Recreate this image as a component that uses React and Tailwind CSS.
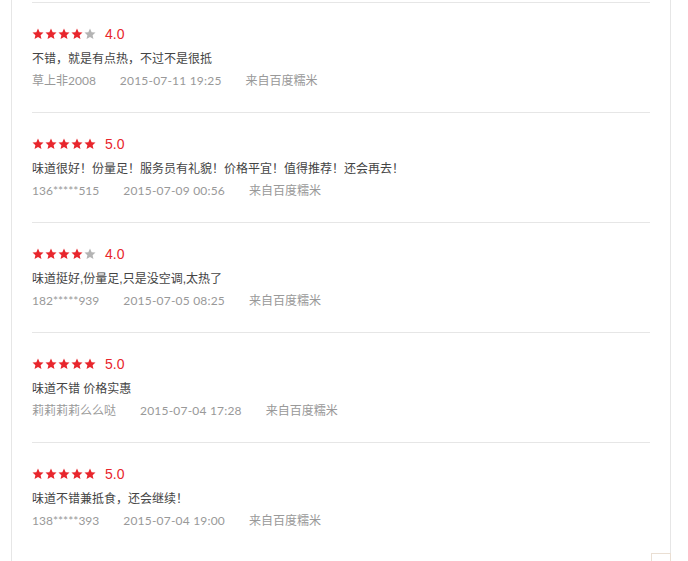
import React from "react";

const reviews = [
  { score: 4, text: "不错，就是有点热，不过不是很抵", user: "草上非2008", date: "2015-07-11 19:25" },
  { score: 5, text: "味道很好！份量足！服务员有礼貌！价格平宜！值得推荐！还会再去！", user: "136*****515", date: "2015-07-09 00:56" },
  { score: 4, text: "味道挺好,份量足,只是没空调,太热了", user: "182*****939", date: "2015-07-05 08:25" },
  { score: 5, text: "味道不错 价格实惠", user: "莉莉莉莉么么哒", date: "2015-07-04 17:28" },
  { score: 5, text: "味道不错兼抵食，还会继续！", user: "138*****393", date: "2015-07-04 19:00" },
];

function Star({ on }) {
  return (
    <svg width="12" height="12" viewBox="0 0 24 24" className="block">
      <path
        d="M12 1.2l3.3 7.1 7.7.8-5.8 5.2 1.7 7.6L12 18l-6.9 3.9 1.7-7.6L1 9.1l7.7-.8z"
        fill={on ? "#e8262d" : "#b4b4b4"}
      />
    </svg>
  );
}

export default function App() {
  return (
    <div
      className="relative w-[688px] h-[561px] bg-white overflow-hidden"
      style={{ fontFamily: '"Liberation Sans", "Noto Sans CJK SC", sans-serif' }}
    >
      <div className="ml-[11px] w-[660px] h-[561px] border-l border-r border-[#e6e6e6] px-[20px] pt-[2px]">
        {reviews.map((r, i) => (
          <div key={i} className="h-[110px] border-t border-[#e6e6e6] pt-[21px]">
            <div className="flex items-center h-[20px]">
              <div className="flex gap-[1px]">
                {[0, 1, 2, 3, 4].map((k) => (
                  <Star key={k} on={k < r.score} />
                ))}
              </div>
              <span className="ml-[9px] text-[14px] leading-[20px] text-[#e8262d]">{r.score}.0</span>
            </div>
            <div className="mt-[4px] text-[12px] leading-[22px] text-[#444]">{r.text}</div>
            <div
              className="flex text-[12px] leading-[22px] text-[#999]"
              style={{ fontFamily: '"Lato", "Noto Sans CJK SC", sans-serif' }}
            >
              <span className="mr-[24px]">{r.user}</span>
              <span className="mr-[24px] tracking-[0.2px]">{r.date}</span>
              <span>来自百度糯米</span>
            </div>
          </div>
        ))}
      </div>
      <div className="absolute left-[651px] top-[553px] w-[20px] h-[20px] border border-[#eadfd3] bg-white"></div>
    </div>
  );
}
